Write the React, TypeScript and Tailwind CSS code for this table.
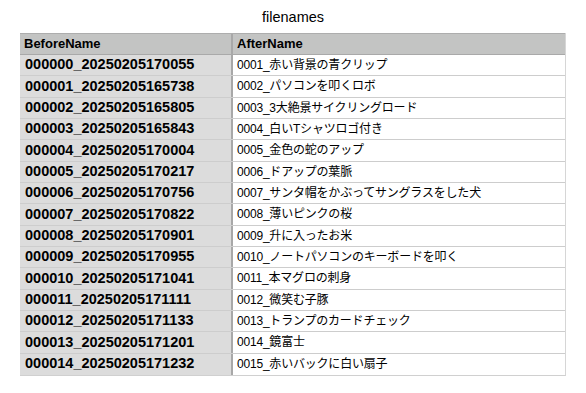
const rows: [string, string][] = [
  ['000000_20250205170055', '0001_赤い背景の青クリップ'],
  ['000001_20250205165738', '0002_パソコンを叩くロボ'],
  ['000002_20250205165805', '0003_3大絶景サイクリングロード'],
  ['000003_20250205165843', '0004_白いTシャツロゴ付き'],
  ['000004_20250205170004', '0005_金色の蛇のアップ'],
  ['000005_20250205170217', '0006_ドアップの葉脈'],
  ['000006_20250205170756', '0007_サンタ帽をかぶってサングラスをした犬'],
  ['000007_20250205170822', '0008_薄いピンクの桜'],
  ['000008_20250205170901', '0009_升に入ったお米'],
  ['000009_20250205170955', '0010_ノートパソコンのキーボードを叩く'],
  ['000010_20250205171041', '0011_本マグロの刺身'],
  ['000011_20250205171111', '0012_微笑む子豚'],
  ['000012_20250205171133', '0013_トランプのカードチェック'],
  ['000013_20250205171201', '0014_鏡富士'],
  ['000014_20250205171232', '0015_赤いバックに白い扇子'],
];

export default function App() {
  return (
    <div className="w-[586px] h-[393px] bg-white font-['Liberation_Sans','Noto_Sans_CJK_JP',sans-serif] text-black">
      <div className="h-[33px] flex items-center justify-center pt-[2px] text-[14.5px]">filenames</div>
      <div className="mx-[20px] w-[546px] border-r border-[#d6d6d6] border-b border-b-[#d0d0d0]">
        {/* header */}
        <div className="flex h-[22px] bg-[#c3c4c3] border-t border-[#adadad] border-b border-b-[#a9a9a9] text-[13px] font-bold">
          <div className="w-[211px] flex items-center pl-[4px]">BeforeName</div>
          <div className="flex-1 flex items-center pl-[4px] border-l-2 border-[#a8a8a8]">AfterName</div>
        </div>
        {rows.map(([before, after]) => (
          <div key={before} className="flex h-[21.33px] border-b border-[#cdcdcd] last:border-b-0">
            <div className="w-[211px] flex items-center pl-[5px] bg-[#dcdcdc] text-[14.5px] font-bold">{before}</div>
            <div className="flex-1 flex items-center pl-[4px] border-l-2 border-[#a8a8a8] bg-white text-[12px] tracking-[-0.2px]">{after}</div>
          </div>
        ))}
      </div>
    </div>
  );
}
